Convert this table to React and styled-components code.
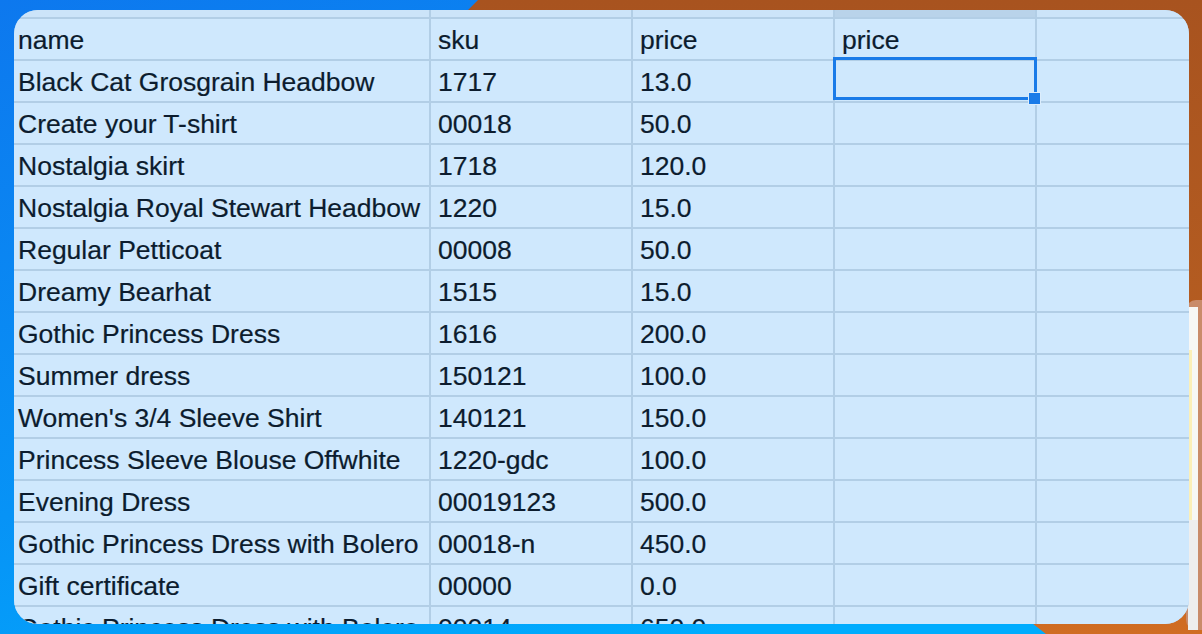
import React from "react";
import styled, { createGlobalStyle } from "styled-components";

const GlobalStyle = createGlobalStyle`
  html, body { margin: 0; padding: 0; overflow: hidden; }
  body { font-family: "Liberation Sans", Arial, sans-serif; }
  * { box-sizing: border-box; }
`;

const Desktop = styled.div`
  position: relative;
  width: 100vw;
  height: 100vh;
  overflow: hidden;
  padding: 10px 13px 10px 14px;
`;

const Wallpaper = styled.svg`
  position: absolute;
  inset: 0;
  width: 100%;
  height: 100%;
  z-index: 0;
`;

const Window = styled.div`
  position: relative;
  z-index: 1;
  width: 100%;
  height: 614px;
  border-radius: 24px;
  overflow: hidden;
  background: #cfe8fd;
`;

const Sheet = styled.div`
  display: grid;
  grid-template-columns: 415px 200px 200px 200px 1fr;
  grid-template-rows: 7px;
  grid-auto-rows: 40px;
  gap: 2px;
  background: #b2cee6;
  font-size: 26.5px;
  color: #0c1c2e;
`;

const HeadStrip = styled.div`
  background: ${(p) => (p.$selected ? "#b9d3ea" : "#cce4f9")};
`;

const Cell = styled.div`
  position: relative;
  z-index: ${(p) => (p.$active ? 2 : "auto")};
  background: #cfe8fd;
  line-height: 40px;
  padding: 1px 4px 0 ${(p) => (p.$first ? "4px" : "7px")};
  white-space: nowrap;
  overflow: ${(p) => (p.$active ? "visible" : "hidden")};
  -webkit-text-stroke: 0.2px #0c1c2e;
`;

const Selection = styled.div`
  position: absolute;
  left: -2px;
  top: -4px;
  width: 204px;
  height: 43px;
  border: 3px solid #1a7be8;
  pointer-events: none;
`;

const FillHandle = styled.div`
  position: absolute;
  left: 193px;
  top: 31px;
  width: 13px;
  height: 13px;
  background: #1a7be8;
  border: 1px solid #dcedfc;
`;

const header = ["name", "sku", "price", "price", ""];

const rows = [
  ["Black Cat Grosgrain Headbow", "1717", "13.0"],
  ["Create your T-shirt", "00018", "50.0"],
  ["Nostalgia skirt", "1718", "120.0"],
  ["Nostalgia Royal Stewart Headbow", "1220", "15.0"],
  ["Regular Petticoat", "00008", "50.0"],
  ["Dreamy Bearhat", "1515", "15.0"],
  ["Gothic Princess Dress", "1616", "200.0"],
  ["Summer dress", "150121", "100.0"],
  ["Women's 3/4 Sleeve Shirt", "140121", "150.0"],
  ["Princess Sleeve Blouse Offwhite", "1220-gdc", "100.0"],
  ["Evening Dress", "00019123", "500.0"],
  ["Gothic Princess Dress with Bolero", "00018-n", "450.0"],
  ["Gift certificate", "00000", "0.0"],
  ["Gothic Princess Dress with Bolero", "00014", "650.0"],
];

function Background() {
  return (
    <Wallpaper viewBox="0 0 1202 634" preserveAspectRatio="none">
      <defs>
        <linearGradient id="blue" x1="0" y1="0" x2="0.6" y2="1">
          <stop offset="0" stopColor="#0d78ee" />
          <stop offset="0.6" stopColor="#0793f6" />
          <stop offset="1" stopColor="#00acfe" />
        </linearGradient>
        <linearGradient id="orange" x1="0" y1="0" x2="0" y2="1">
          <stop offset="0" stopColor="#a8531f" />
          <stop offset="0.5" stopColor="#b45c21" />
          <stop offset="1" stopColor="#d06c22" />
        </linearGradient>
      </defs>
      <rect width="1202" height="634" fill="url(#blue)" />
      <path
        d="M478 0 L466 12 C420 90 700 440 1028 620 L1046 634 L1202 634 L1202 0 Z"
        fill="url(#orange)"
      />
      <rect x="1186" y="300" width="40" height="330" rx="10" fill="#c98b6a" />
      <rect x="1188" y="307" width="10" height="320" fill="#f7f7f5" />
      <rect x="1188" y="350" width="4" height="170" fill="#fbefb8" />
      <rect x="1188" y="520" width="10" height="110" fill="#eeeeee" />
    </Wallpaper>
  );
}

export default function App() {
  return (
    <>
      <GlobalStyle />
      <Desktop>
        <Background />
        <Window>
          <Sheet>
            {[0, 1, 2, 3, 4].map((i) => (
              <HeadStrip key={"h" + i} $selected={i === 3} />
            ))}
            {header.map((h, i) => (
              <Cell key={"c" + i} $first={i === 0}>
                {h}
              </Cell>
            ))}
            {rows.map((r, ri) =>
              [...r, "", ""].map((v, ci) => {
                const active = ri === 0 && ci === 3;
                return (
                  <Cell key={ri + "-" + ci} $first={ci === 0} $active={active}>
                    {v}
                    {active && <Selection />}
                    {active && <FillHandle />}
                  </Cell>
                );
              })
            )}
          </Sheet>
        </Window>
      </Desktop>
    </>
  );
}
